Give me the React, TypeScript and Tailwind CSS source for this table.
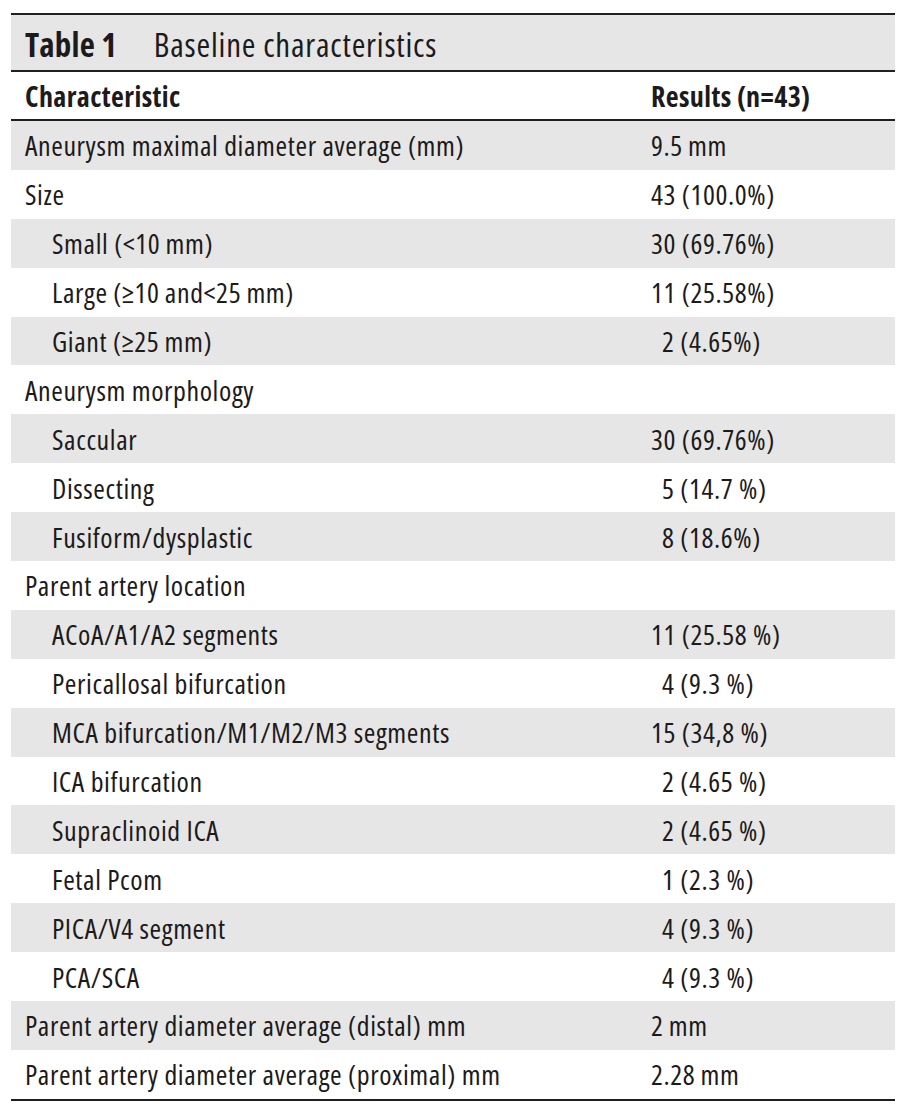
const rows: { label: string; value: string; indent?: boolean; pad?: boolean }[] = [
  { label: "Aneurysm maximal diameter average (mm)", value: "9.5\u2009mm" },
  { label: "Size", value: "43 (100.0%)" },
  { label: "Small (<10\u2009mm)", value: "30 (69.76%)", indent: true },
  { label: "Large (\u226510\u2009and<25\u2009mm)", value: "11 (25.58%)", indent: true },
  { label: "Giant (\u226525\u2009mm)", value: "2 (4.65%)", indent: true, pad: true },
  { label: "Aneurysm morphology", value: "" },
  { label: "Saccular", value: "30 (69.76%)", indent: true },
  { label: "Dissecting", value: "5 (14.7 %)", indent: true, pad: true },
  { label: "Fusiform/dysplastic", value: "8 (18.6%)", indent: true, pad: true },
  { label: "Parent artery location", value: "" },
  { label: "ACoA/A1/A2 segments", value: "11 (25.58 %)", indent: true },
  { label: "Pericallosal bifurcation", value: "4 (9.3 %)", indent: true, pad: true },
  { label: "MCA bifurcation/M1/M2/M3 segments", value: "15 (34,8 %)", indent: true },
  { label: "ICA bifurcation", value: "2 (4.65 %)", indent: true, pad: true },
  { label: "Supraclinoid ICA", value: "2 (4.65 %)", indent: true, pad: true },
  { label: "Fetal Pcom", value: "1 (2.3 %)", indent: true, pad: true },
  { label: "PICA/V4 segment", value: "4 (9.3 %)", indent: true, pad: true },
  { label: "PCA/SCA", value: "4 (9.3 %)", indent: true, pad: true },
  { label: "Parent artery diameter average (distal) mm", value: "2\u2009mm" },
  { label: "Parent artery diameter average (proximal) mm", value: "2.28\u2009mm" },
]

export default function App() {
  return (
    <div
      className="min-h-[1114px] bg-white pt-[13px] px-[11px] text-[#1d1a1b] font-stretch-condensed"
      style={{ fontFamily: '"Open Sans", "Noto Sans", sans-serif' }}
    >
      <div className="w-[884px] border-t-2 border-b-2 border-[#231f20]">
        {/* Title */}
        <div className="h-[57px] bg-[#e6e6e6] border-b-2 border-[#231f20] flex items-center pl-[14px] pt-[4px] text-[33px]">
          <span className="font-bold tracking-[0.2px]">Table 1</span>
          <span className="ml-[37px] tracking-[0.8px]">Baseline characteristics</span>
        </div>

        {/* Header */}
        <div className="h-[49px] border-b-2 border-[#231f20] flex items-center text-[28px] font-bold tracking-[0.4px]">
          <div className="w-[640px] pl-[14px]">Characteristic</div>
          <div>Results (n=43)</div>
        </div>

        {rows.map((r, i) => (
          <div
            key={r.label}
            className={`h-[48.9px] flex items-center text-[28px] tracking-[0.6px] ${i % 2 === 0 ? "bg-[#e6e6e6]" : "bg-white"}`}
          >
            <div className={`w-[640px] ${r.indent ? "pl-[41px]" : "pl-[14px]"}`}>{r.label}</div>
            <div className={r.pad ? "pl-[11px]" : ""}>{r.value}</div>
          </div>
        ))}
      </div>
    </div>
  )
}
